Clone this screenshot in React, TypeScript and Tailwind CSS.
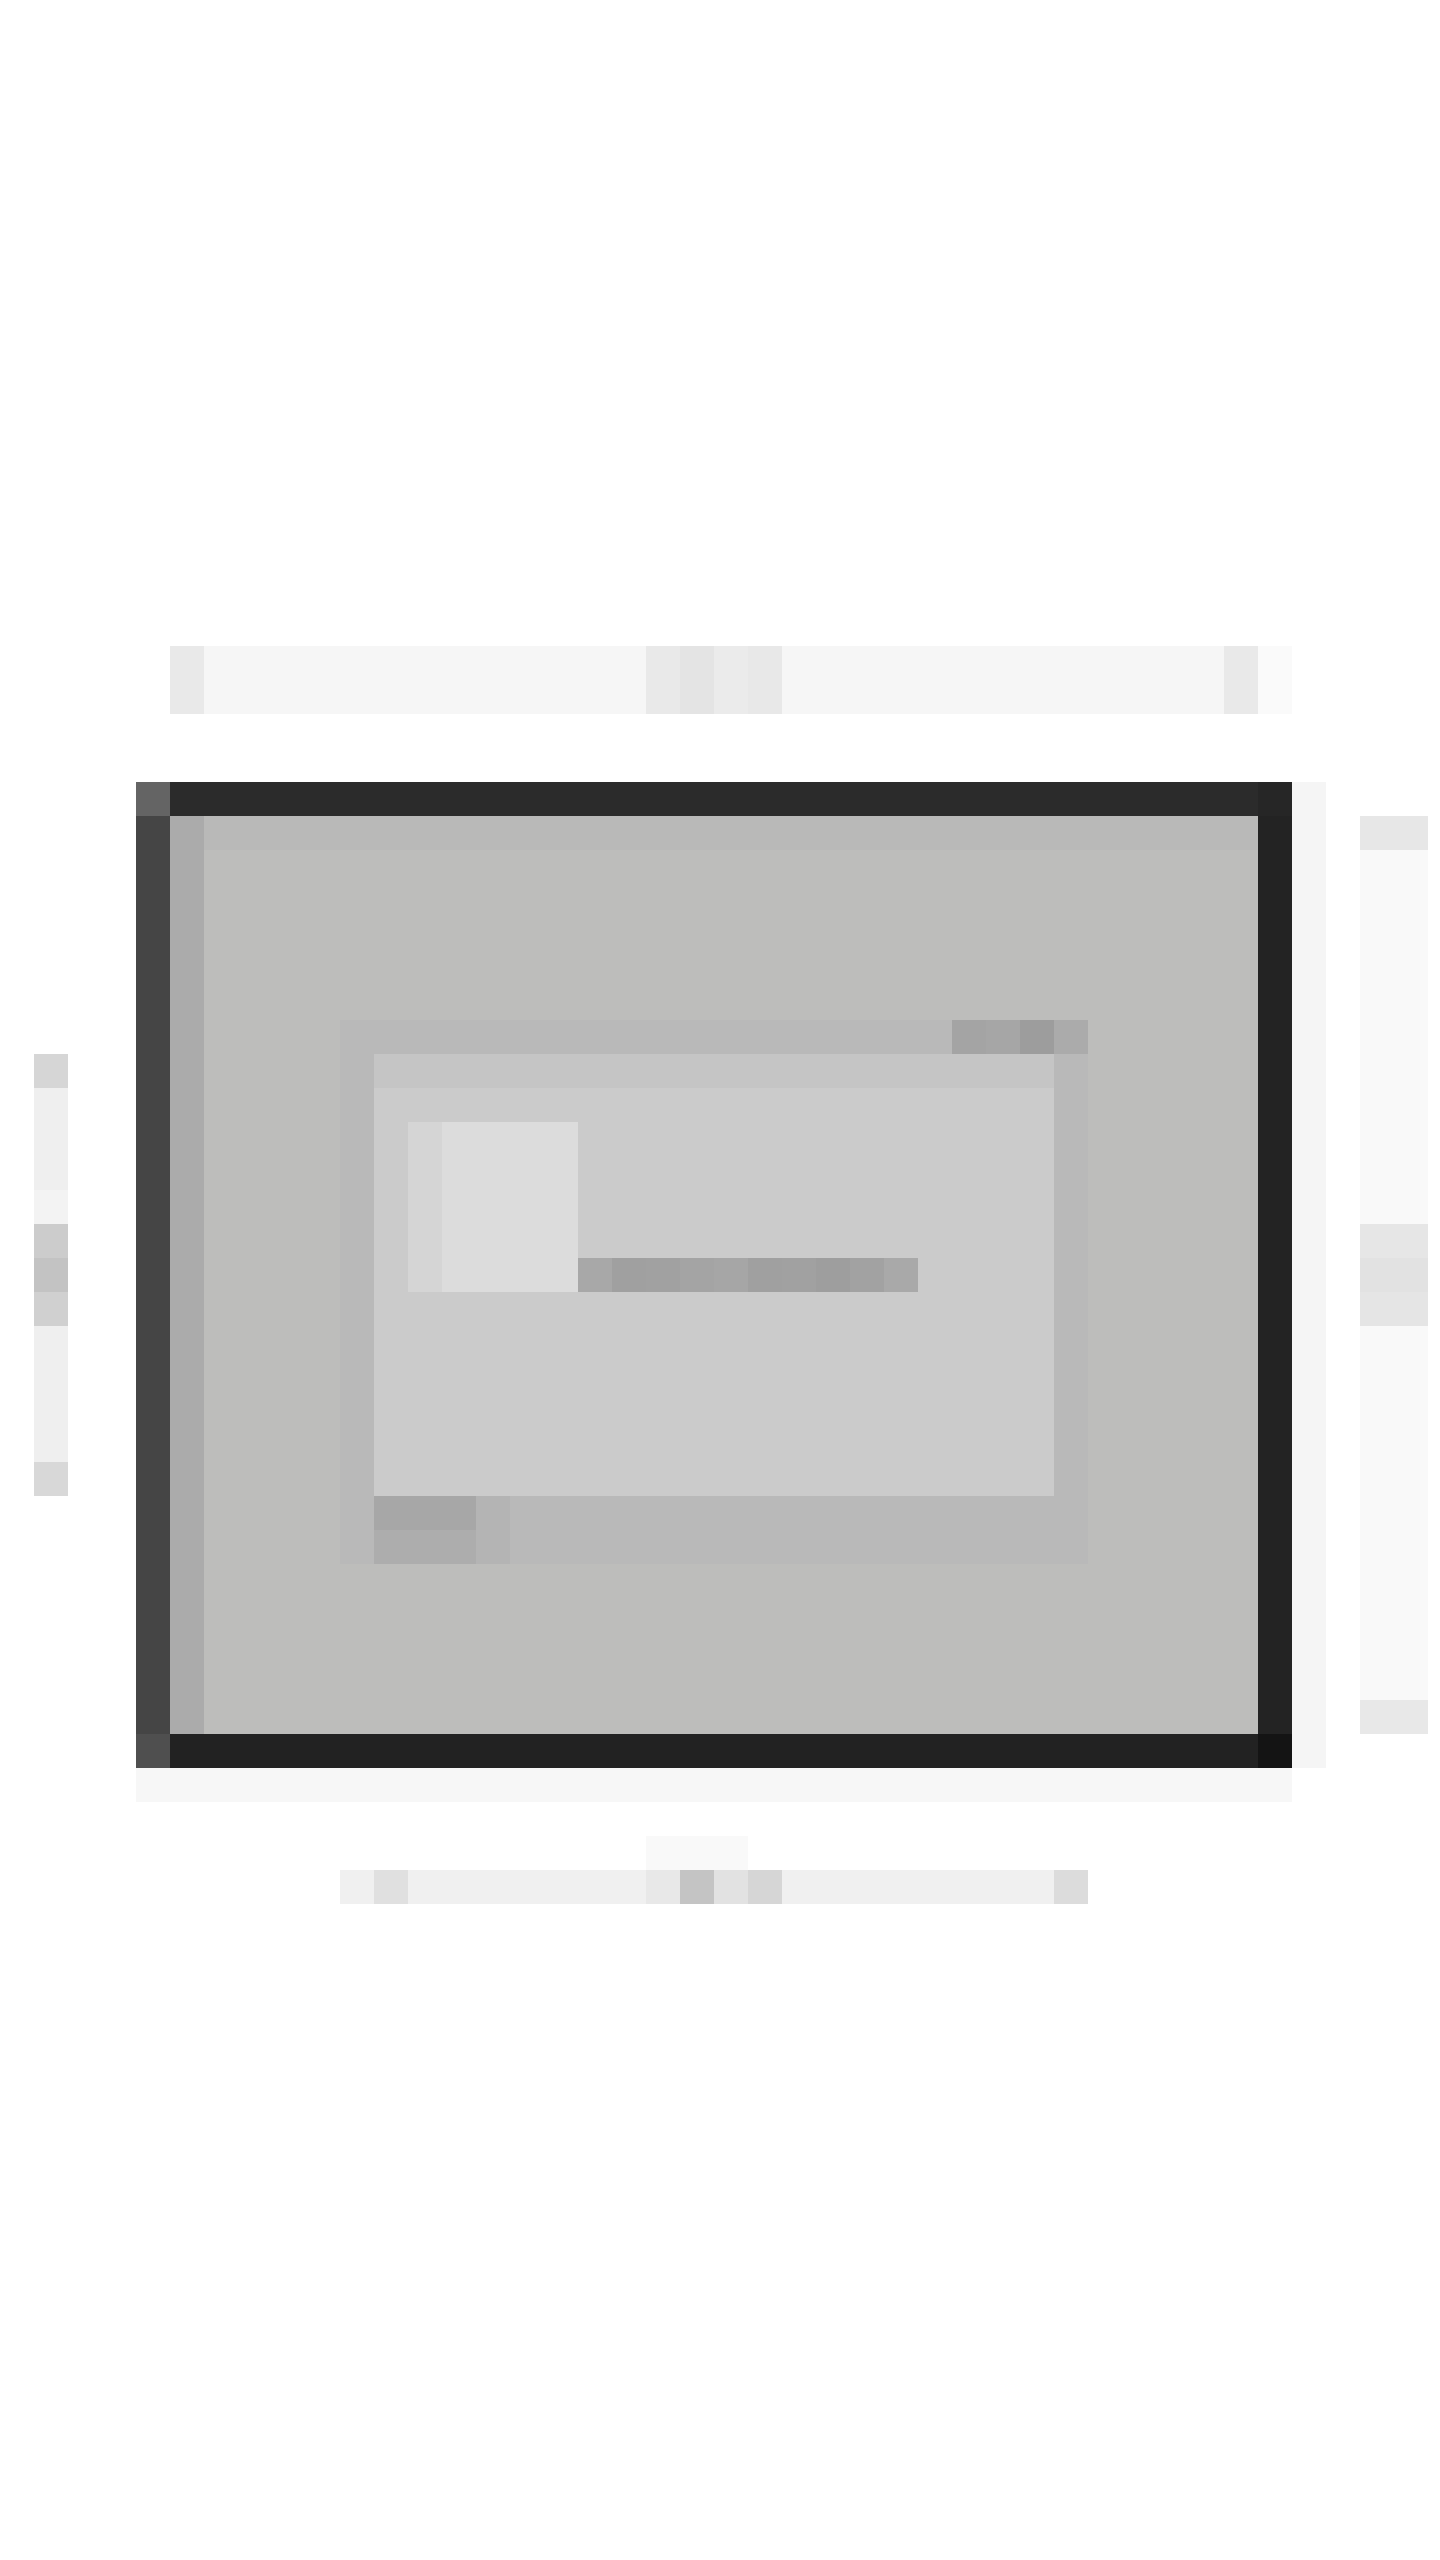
// Pixelated box-model diagram: a framed element with its padding/content
// boxes and four dimension markers. Everything sits on a 34px block grid.

type Segs = string[];

// horizontal run of blocks, each entry carries its own width + colour
function Row({ segs, className }: { segs: Segs; className: string }) {
  return (
    <div className={`flex ${className}`}>
      {segs.map((c, i) => (
        <div key={i} className={`h-full shrink-0 ${c}`} />
      ))}
    </div>
  );
}

// vertical run of blocks
function Col({ segs, className }: { segs: Segs; className: string }) {
  return (
    <div className={`flex flex-col ${className}`}>
      {segs.map((c, i) => (
        <div key={i} className={`w-full shrink-0 ${c}`} />
      ))}
    </div>
  );
}

const topMarker: Segs = [
  "w-[34px] bg-[#e9e9e9]",
  "w-[442px] bg-[#f6f6f6]",
  "w-[34px] bg-[#e9e9e9]",
  "w-[34px] bg-[#e4e4e4]",
  "w-[34px] bg-[#ebebeb]",
  "w-[34px] bg-[#e8e8e8]",
  "w-[442px] bg-[#f6f6f6]",
  "w-[34px] bg-[#e9e9e9]",
  "w-[34px] bg-[#fafafa]",
];

const bottomMarker: Segs = [
  "w-[34px] bg-[#f0f0f0]",
  "w-[34px] bg-[#e0e0e0]",
  "w-[238px] bg-[#f0f0f0]",
  "w-[34px] bg-[#e8e8e8]",
  "w-[34px] bg-[#c4c4c4]",
  "w-[34px] bg-[#e2e2e2]",
  "w-[34px] bg-[#d6d6d6]",
  "w-[272px] bg-[#f0f0f0]",
  "w-[34px] bg-[#dcdcdc]",
];

const leftMarker: Segs = [
  "h-[34px] bg-[#d6d6d6]",
  "h-[102px] bg-[#efefef]",
  "h-[34px] bg-[#f3f3f3]",
  "h-[34px] bg-[#cccccc]",
  "h-[34px] bg-[#c3c3c3]",
  "h-[34px] bg-[#d0d0d0]",
  "h-[136px] bg-[#efefef]",
  "h-[34px] bg-[#d8d8d8]",
];

const rightMarker: Segs = [
  "h-[34px] bg-[#e7e7e7]",
  "h-[374px] bg-[#f9f9f9]",
  "h-[34px] bg-[#e6e6e6]",
  "h-[34px] bg-[#e2e2e2]",
  "h-[34px] bg-[#e5e5e5]",
  "h-[374px] bg-[#f9f9f9]",
  "h-[34px] bg-[#e8e8e8]",
];

const cornerLabel: Segs = [
  "w-[34px] bg-[#a4a4a4]",
  "w-[34px] bg-[#a6a6a6]",
  "w-[34px] bg-[#9d9d9d]",
  "w-[34px] bg-[#ababab]",
];

const valueLine: Segs = [
  "w-[34px] bg-[#a8a8a8]",
  "w-[34px] bg-[#a0a0a0]",
  "w-[34px] bg-[#a1a1a1]",
  "w-[34px] bg-[#a4a4a4]",
  "w-[34px] bg-[#a6a6a6]",
  "w-[34px] bg-[#a0a0a0]",
  "w-[34px] bg-[#a1a1a1]",
  "w-[34px] bg-[#9e9e9e]",
  "w-[34px] bg-[#a2a2a2]",
  "w-[34px] bg-[#a9a9a9]",
];

function InnerBox() {
  return (
    <div className="w-[748px] h-[544px] bg-[#b9b9b9] flex flex-col">
      <div className="h-[34px] flex justify-end">
        <Row segs={cornerLabel} className="h-[34px]" />
      </div>
      <div className="h-[442px] flex pl-[34px]">
        <div className="w-[680px] flex flex-col">
          <div className="h-[34px] bg-[#c5c5c5]" />
          <div className="flex-1 bg-[#cbcbcb] pt-[34px] pl-[34px]">
            <div className="flex items-end">
              <div className="w-[170px] h-[170px] flex">
                <div className="w-[34px] bg-[#d5d5d5]" />
                <div className="flex-1 bg-[#dcdcdc]" />
              </div>
              <Row segs={valueLine} className="h-[34px]" />
            </div>
          </div>
        </div>
      </div>
      <div className="h-[68px] flex pl-[34px]">
        <div className="w-[102px] flex flex-col">
          <div className="h-[34px] bg-[#a7a7a7]" />
          <div className="h-[34px] bg-[#adadad]" />
        </div>
        <div className="w-[34px] bg-[#b4b4b4]" />
      </div>
    </div>
  );
}

function Frame() {
  return (
    <div className="col-start-5 col-span-34 row-start-24 row-span-29 grid grid-cols-[34px_1fr_34px] grid-rows-[34px_1fr_34px]">
      <div className="bg-[#646464]" />
      <div className="bg-[#2b2b2b]" />
      <div className="bg-[#262626]" />
      <div className="bg-[#454545]" />
      <div className="flex min-h-0">
        <div className="w-[34px] shrink-0 bg-[#ababab]" />
        <div className="flex-1 flex flex-col">
          <div className="h-[34px] bg-[#b9b9b8]" />
          <div className="flex-1 bg-[#bdbdbb] pl-[136px] pt-[170px]">
            <InnerBox />
          </div>
        </div>
      </div>
      <div className="bg-[#232323]" />
      <div className="bg-[#4f4f4f]" />
      <div className="bg-[#222222]" />
      <div className="bg-[#141414]" />
    </div>
  );
}

export default function App() {
  return (
    <div className="w-[1440px] h-[2560px] bg-white overflow-hidden grid grid-cols-[repeat(42,34px)] grid-rows-[repeat(75,34px)]">
      {/* width marker above the frame */}
      <Row segs={topMarker} className="col-start-6 col-span-33 row-start-20 row-span-2" />

      <Frame />

      {/* soft shadow right and below */}
      <div className="col-start-39 col-span-1 row-start-24 row-span-29 bg-[#f5f5f5]" />
      <div className="col-start-5 col-span-34 row-start-53 row-span-1 bg-[#f7f7f7]" />

      {/* height markers */}
      <Col segs={leftMarker} className="col-start-2 col-span-1 row-start-32 row-span-13" />
      <Col segs={rightMarker} className="col-start-41 col-span-2 row-start-25 row-span-27" />

      {/* inner width marker below */}
      <div className="col-start-20 col-span-3 row-start-55 row-span-1 bg-[#f9f9f9]" />
      <Row segs={bottomMarker} className="col-start-11 col-span-22 row-start-56 row-span-1" />
    </div>
  );
}
